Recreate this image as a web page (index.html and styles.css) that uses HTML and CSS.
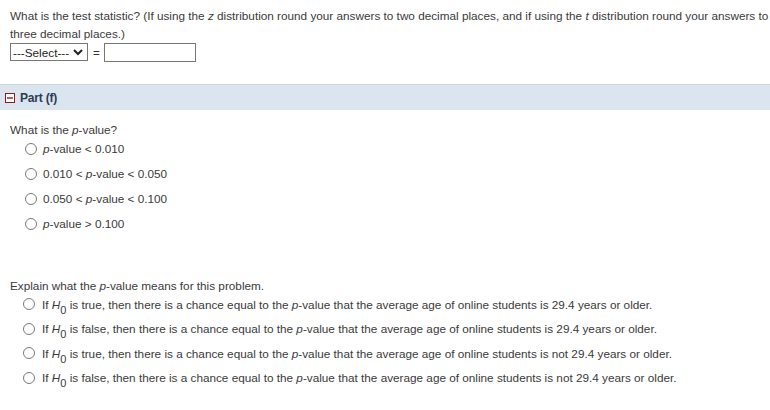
FILE: index.html
```html
<!DOCTYPE html>
<html>
<head>
<meta charset="utf-8">
<link rel="stylesheet" href="styles.css">
</head>
<body>
<div class="part-body top">
  <p class="q">What is the test statistic? (If using the <i>z</i> distribution round your answers to two decimal places, and if using the <i>t</i> distribution round your answers to three decimal places.)</p>
  <div class="stat-row">
    <div class="select"><span>---Select---</span><svg width="10" height="8" viewBox="0 0 10 8"><path d="M1 2 L5 6 L9 2" fill="none" stroke="#222" stroke-width="2"/></svg></div>
    <span class="eq">=</span>
    <div class="input"></div>
  </div>
</div>

<div class="part-head">
  <span class="toggle"><span class="minus"></span></span>
  <span class="part-title">Part (f)</span>
</div>

<div class="part-body main">
  <p class="q first">What is the <i>p</i>-value?</p>
  <ul class="opts">
    <li><span class="radio"></span><span><i>p</i>-value &lt; 0.010</span></li>
    <li><span class="radio"></span><span>0.010 &lt; <i>p</i>-value &lt; 0.050</span></li>
    <li><span class="radio"></span><span>0.050 &lt; <i>p</i>-value &lt; 0.100</span></li>
    <li><span class="radio"></span><span><i>p</i>-value &gt; 0.100</span></li>
  </ul>

  <p class="q explain">Explain what the <i>p</i>-value means for this problem.</p>
  <ul class="opts long">
    <li><span class="radio"></span><span>If <i>H</i><sub>0</sub> is true, then there is a chance equal to the <i>p</i>-value that the average age of online students is 29.4 years or older.</span></li>
    <li><span class="radio"></span><span>If <i>H</i><sub>0</sub> is false, then there is a chance equal to the <i>p</i>-value that the average age of online students is 29.4 years or older.</span></li>
    <li><span class="radio"></span><span>If <i>H</i><sub>0</sub> is true, then there is a chance equal to the <i>p</i>-value that the average age of online students is not 29.4 years or older.</span></li>
    <li><span class="radio"></span><span>If <i>H</i><sub>0</sub> is false, then there is a chance equal to the <i>p</i>-value that the average age of online students is not 29.4 years or older.</span></li>
  </ul>
</div>
</body>
</html>
```

FILE: styles.css
```css
* { box-sizing: border-box; }
html, body { margin: 0; padding: 0; background: #fff; }
body {
  font-family: "Liberation Sans", Arial, sans-serif;
  font-size: 11.75px;
  color: #3a3a3a;
  width: 770px;
  height: 410px;
  overflow: hidden;
}
.part-body { padding: 0 10px; }
.top { padding: 7px 0 23px 10px; }
.q { margin: 0; line-height: 18px; }
.stat-row {
  display: flex;
  align-items: center;
  height: 18px;
}
.select {
  width: 78px;
  height: 18px;
  border: 1px solid #767676;
  display: flex;
  align-items: center;
  justify-content: space-between;
  padding: 0 4px 0 2px;
  color: #222;
}
.eq { margin: 0 4px 0 5px; color: #333; }
.input {
  width: 92px;
  height: 19px;
  border: 1px solid #767676;
}
.part-head {
  border-top: 1px solid #cfd4da;
  background: #dbe5ef;
  height: 26px;
  display: flex;
  align-items: center;
  padding-left: 5px;
}
.toggle {
  width: 10px;
  height: 10px;
  border: 1.5px solid #8c1c1c;
  background: #fff;
  display: flex;
  align-items: center;
  justify-content: center;
  margin-right: 5px;
}
.minus { width: 6px; height: 2px; background: #c95a5a; }
.part-title { color: #2d3b52; font-size: 12px; font-weight: bold; letter-spacing: -0.2px; }
.q.first { margin-top: 11px; }
.opts {
  list-style: none;
  margin: -3px 0 0 0;
  padding: 0 0 0 15px;
}
.opts li {
  display: flex;
  align-items: center;
  height: 25px;
}
.radio {
  width: 12px;
  height: 12px;
  border: 1px solid #7a7a7a;
  border-radius: 50%;
  margin-right: 6px;
  flex: none;
  background: #fff;
}
.explain { margin-top: 41px; }
.opts.long { padding-left: 13px; }
.opts.long li { height: 24.5px; }
.opts.long .radio { margin-right: 7px; }
sub { font-size: 11px; line-height: 0; vertical-align: -5px; }
```
